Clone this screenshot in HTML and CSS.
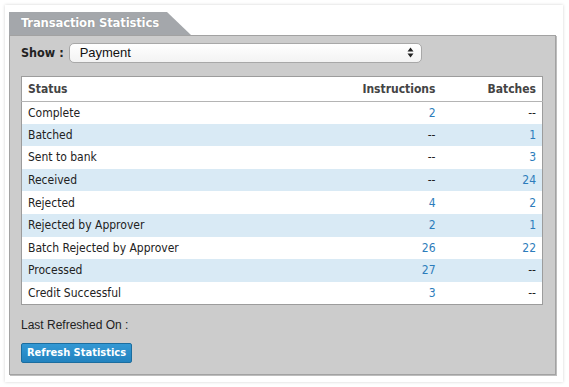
FILE: index.html
```html
<!DOCTYPE html>
<html lang="en">
<head>
  <meta charset="UTF-8" />
  <title>Transaction Statistics</title>
  <link rel="stylesheet" href="styles.css">
</head>
<body>
  <div class="card">
    <div class="tab">Transaction Statistics</div>
    <section class="panel">
      <div class="show-row">
        <label for="showSelect">Show :</label>
        <div class="select">
          <span>Payment</span>
          <svg width="7" height="11" viewBox="0 0 7 11"><path d="M3.5 0.5L6.5 4.5H0.5Z M3.5 10.5L6.5 6.5H0.5Z" fill="#222"/></svg>
        </div>
      </div>

      <table class="stats">
        <thead>
          <tr>
            <th class="status">Status</th>
            <th class="num">Instructions</th>
            <th class="num batches">Batches</th>
          </tr>
        </thead>
        <tbody>
          <tr><td>Complete</td><td class="num"><a>2</a></td><td class="num">--</td></tr>
          <tr><td>Batched</td><td class="num">--</td><td class="num"><a>1</a></td></tr>
          <tr><td>Sent to bank</td><td class="num">--</td><td class="num"><a>3</a></td></tr>
          <tr><td>Received</td><td class="num">--</td><td class="num"><a>24</a></td></tr>
          <tr><td>Rejected</td><td class="num"><a>4</a></td><td class="num"><a>2</a></td></tr>
          <tr><td>Rejected by Approver</td><td class="num"><a>2</a></td><td class="num"><a>1</a></td></tr>
          <tr><td>Batch Rejected by Approver</td><td class="num"><a>26</a></td><td class="num"><a>22</a></td></tr>
          <tr><td>Processed</td><td class="num"><a>27</a></td><td class="num">--</td></tr>
          <tr><td>Credit Successful</td><td class="num"><a>3</a></td><td class="num">--</td></tr>
        </tbody>
      </table>

      <p class="refreshed">Last Refreshed On :</p>
      <button class="refresh-btn">Refresh Statistics</button>
    </section>
  </div>
</body>
</html>
```

FILE: styles.css
```css
* {
  box-sizing: border-box;
}

body {
  margin: 0;
  padding: 5px 6px 7px 5px;
  background: #fff;
  font-family: "DejaVu Sans Condensed", "DejaVu Sans", sans-serif;
  font-size: 12px;
  color: #222;
}

.card {
  background: #fff;
  padding: 7px 7px 7px 4px;
  box-shadow: 0 0 3px rgba(0, 0, 0, 0.18);
}

.tab {
  width: 182px;
  height: 23px;
  padding: 3px 0 0 12px;
  background: #a4a7ab;
  color: #fff;
  font-weight: bold;
  font-size: 13px;
  letter-spacing: -0.2px;
  text-shadow: 0 0 1px rgba(0, 0, 0, 0.25);
  clip-path: polygon(0 0, 158px 0, 100% 100%, 0 100%);
}

.panel {
  background: #cccccc;
  border: 1px solid #a2a2a2;
  box-shadow: 1px 1px 0 #bdbdbd;
  padding: 6px 12px 11px 11px;
}

.show-row {
  display: flex;
  align-items: center;
  gap: 5px;
  height: 21px;
}

.show-row label {
  font-weight: bold;
  font-size: 12.5px;
  color: #222;
}

.select {
  width: 353px;
  height: 20px;
  display: flex;
  align-items: center;
  justify-content: space-between;
  padding: 0 7px 0 10px;
  background: linear-gradient(#ffffff, #f3f3f3);
  border: 1px solid #a8a8a8;
  border-radius: 5px;
  font-family: "Liberation Sans", Arial, sans-serif;
  font-size: 13px;
  color: #111;
}

.stats {
  width: 100%;
  margin-top: 13px;
  border-collapse: collapse;
  background: #fff;
  border: 1px solid #9c9c9c;
}

.stats th,
.stats td {
  height: 22.6px;
  padding: 0 6px;
  text-align: left;
  white-space: nowrap;
}

.stats th {
  height: 24.5px;
  font-weight: bold;
  color: #444;
  border-bottom: 1px solid #b4b4b4;
}

.stats .num {
  text-align: right;
  width: 140px;
}

.stats .batches,
.stats td:last-child {
  width: 101px;
}

.stats tbody tr:nth-child(even) {
  background: #d9eaf5;
}

.stats a {
  color: #2c7cbb;
}

.refreshed {
  margin: 13px 0 0;
  font-family: "Liberation Sans", Arial, sans-serif;
  font-size: 12px;
  line-height: 14px;
  color: #222;
}

.refresh-btn {
  display: block;
  margin-top: 11px;
  height: 20px;
  padding: 0 5px;
  background: linear-gradient(#3398d4, #2383bf);
  border: 1px solid #1b6d9f;
  border-radius: 2px;
  color: #fff;
  font-family: "DejaVu Sans Condensed", "DejaVu Sans", sans-serif;
  font-weight: bold;
  font-size: 11px;
  cursor: pointer;
}
```
